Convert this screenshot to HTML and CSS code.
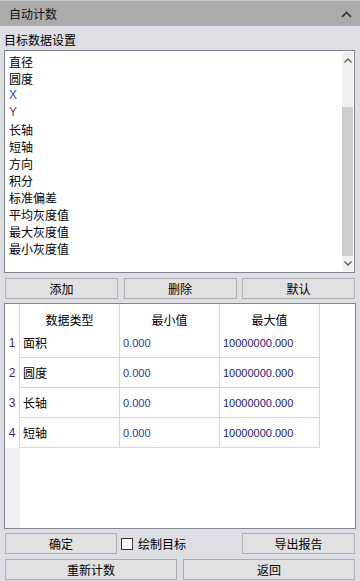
FILE: index.html
```html
<!DOCTYPE html>
<html lang="zh-CN">
<head>
  <meta charset="UTF-8">
  <meta name="viewport" content="width=device-width, initial-scale=1.0">
  <title>自动计数</title>
  <link rel="stylesheet" href="styles.css">
</head>
<body>
  <div class="panel">
    <div class="titlebar">
      <span>自动计数</span>
      <svg class="collapse" width="11" height="7" viewBox="0 0 11 7">
        <path d="M1 6 L5.5 1.5 L10 6" fill="none" stroke="#333" stroke-width="1.6" />
      </svg>
    </div>

    <div class="group-label">目标数据设置</div>

    <div class="listbox">
      <ul class="list">
        <li>直径</li>
        <li>圆度</li>
        <li class="latin latin-x">X</li>
        <li class="latin latin-y">Y</li>
        <li>长轴</li>
        <li>短轴</li>
        <li>方向</li>
        <li>积分</li>
        <li>标准偏差</li>
        <li>平均灰度值</li>
        <li>最大灰度值</li>
        <li>最小灰度值</li>
      </ul>
      <div class="scrollbar">
        <div class="arrow arrow-up">
          <svg width="8" height="5" viewBox="0 0 8 5"><path d="M0.5 4.5 L4 1 L7.5 4.5" fill="none" stroke="#606060" stroke-width="1.4" /></svg>
        </div>
        <div class="track"><div class="thumb"></div></div>
        <div class="arrow arrow-down">
          <svg width="8" height="5" viewBox="0 0 8 5"><path d="M0.5 0.5 L4 4 L7.5 0.5" fill="none" stroke="#606060" stroke-width="1.4" /></svg>
        </div>
      </div>
    </div>

    <div class="btn-row">
      <button class="btn">添加</button>
      <button class="btn">删除</button>
      <button class="btn">默认</button>
    </div>

    <div class="grid-box">
      <div class="grid">
        <div class="cell head rowhead"></div>
        <div class="cell head">数据类型</div>
        <div class="cell head">最小值</div>
        <div class="cell head">最大值</div>

        <div class="cell rowhead">1</div>
        <div class="cell data">面积</div>
        <div class="cell data num-min">0.000</div>
        <div class="cell data num-max">10000000.000</div>

        <div class="cell rowhead">2</div>
        <div class="cell data">圆度</div>
        <div class="cell data num-min">0.000</div>
        <div class="cell data num-max">10000000.000</div>

        <div class="cell rowhead">3</div>
        <div class="cell data">长轴</div>
        <div class="cell data num-min">0.000</div>
        <div class="cell data num-max">10000000.000</div>

        <div class="cell rowhead">4</div>
        <div class="cell data">短轴</div>
        <div class="cell data num-min">0.000</div>
        <div class="cell data num-max">10000000.000</div>
      </div>
      <div class="grid-fill"><div class="fill-head"></div></div>
    </div>

    <div class="btn-row btn-row-check">
      <button class="btn">确定</button>
      <label class="check">
        <span class="box"></span>
        <span>绘制目标</span>
      </label>
      <button class="btn">导出报告</button>
    </div>

    <div class="btn-row btn-row-two">
      <button class="btn">重新计数</button>
      <button class="btn">返回</button>
    </div>
  </div>
</body>
</html>
```

FILE: styles.css
```css
body {
  margin: 0;
  padding: 0;
  width: 360px;
  height: 581px;
  overflow: hidden;
  background-color: #dcdfe3;
  font-family: "Noto Sans CJK SC", "Liberation Sans", sans-serif;
  font-size: 12px;
  color: #000;
}

.panel {
  display: flex;
  flex-direction: column;
  width: 360px;
  height: 581px;
}

.titlebar {
  height: 26px;
  box-sizing: border-box;
  border-top: 1px solid #c6c6c6;
  background-color: #ababab;
  display: flex;
  align-items: center;
  justify-content: space-between;
  padding: 0 8px 0 9px;
  color: #111;
}

.collapse {
  margin-top: 1px;
}

.group-label {
  height: 24px;
  box-sizing: border-box;
  padding: 5px 0 0 4px;
  line-height: 17px;
}

.listbox {
  height: 223px;
  margin: 0 5px 0 4px;
  box-sizing: border-box;
  border: 1px solid #828790;
  background-color: #fff;
  display: flex;
}

.list {
  flex: 1;
  list-style: none;
  margin: 0;
  padding: 2px 0 0 4px;
}
.list li {
  line-height: 17px;
  height: 17px;
}
.list .latin {
  font-family: "Liberation Sans", sans-serif;
  font-size: 12px;
}
.latin-x { color: #2a4f9a; }
.latin-y { color: #7a3a22; }

.scrollbar {
  width: 11px;
  margin: 1px 1px 1px 0;
  background-color: #f0f0f0;
  display: flex;
  flex-direction: column;
}
.arrow {
  height: 17px;
  display: flex;
  align-items: center;
  justify-content: center;
}
.arrow-down {
  height: 15px;
}
.track {
  flex: 1;
  padding-top: 38px;
  display: flex;
}
.thumb {
  flex: 1;
  background-color: #cdcdcd;
}

.btn-row {
  display: grid;
  grid-template-columns: 1fr 1fr 1fr;
  column-gap: 5.5px;
  height: 21px;
  margin-top: 5px;
  padding: 0 5px;
}
.btn-row-check {
  margin-top: 4px;
  grid-template-columns: 112px 1fr 113px;
  column-gap: 4px;
}
.btn-row-two {
  grid-template-columns: 1fr 1fr;
  column-gap: 6px;
}

.btn {
  margin: 0;
  padding: 0;
  height: 21px;
  border: 1px solid #adadad;
  background-color: #e1e1e1;
  font-family: inherit;
  font-size: 12px;
  color: #000;
  line-height: 19px;
}

.check {
  display: flex;
  align-items: center;
  gap: 5px;
}
.box {
  width: 12px;
  height: 12px;
  box-sizing: border-box;
  border: 1px solid #333;
  background-color: #fff;
}

.grid-box {
  height: 226px;
  margin: 4px 4px 0 4px;
  box-sizing: border-box;
  border: 1px solid #828790;
  background-color: #fff;
  display: flex;
  flex-direction: column;
}

.grid {
  display: grid;
  grid-template-columns: 15px 100px 100px 100px;
  grid-template-rows: 24px repeat(4, 30px);
}

.cell {
  box-sizing: border-box;
  border-right: 1px solid #d6d6d6;
  display: flex;
  align-items: center;
  white-space: nowrap;
}
.head {
  justify-content: center;
  padding-top: 6px;
}
.rowhead {
  justify-content: center;
  font-family: "Liberation Sans", sans-serif;
  font-size: 12px;
  color: #4a2070;
}
.data {
  border-bottom: 1px solid #d6d6d6;
  padding-left: 3px;
}
.num-min, .num-max {
  font-family: "Liberation Sans", sans-serif;
  font-size: 11px;
}
.num-min { color: #1c3c9c; }
.num-max { color: #202070; }

.grid-fill {
  flex: 1;
  display: flex;
}
.fill-head {
  width: 15px;
  background-color: #f0f0f0;
}
```
